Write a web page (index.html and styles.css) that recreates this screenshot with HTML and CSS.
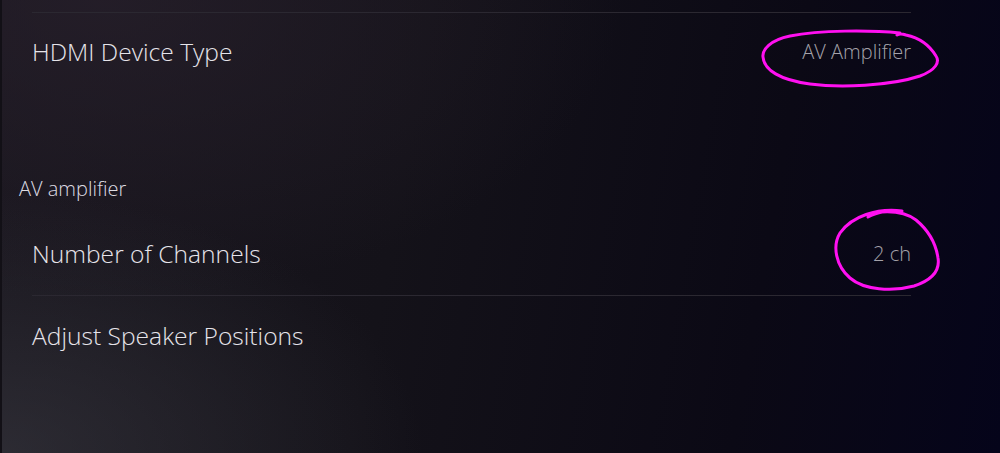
FILE: index.html
```html
<!DOCTYPE html>
<html lang="en">
<head>
    <meta charset="UTF-8">
    <meta name="viewport" content="width=device-width, initial-scale=1.0">
    <title>Sound Output</title>
    <link rel="stylesheet" href="styles.css">
</head>
<body>
    <div id="screen">
        <div id="settingsList">
            <div class="row first">
                <span class="label">HDMI Device Type</span>
                <span class="value">AV Amplifier</span>
                <svg class="scribble scribble-wide" width="180" height="60" viewBox="0 0 180 60">
                    <path d="M140 3 C110 0 60 0 30 6 C10 10 2 20 3 27 C4 40 20 50 50 54 C80 58 130 56 160 46 C176 40 180 32 176 26 C170 16 160 8 146 5 C143 4 140 3 137 5" />
                </svg>
            </div>
            <div class="section-title">AV amplifier</div>
            <div class="row">
                <span class="label">Number of Channels</span>
                <span class="value">2 ch</span>
                <svg class="scribble scribble-round" width="110" height="88" viewBox="0 0 110 88">
                    <path d="M70 3 C45 0 20 8 8 25 C0 38 4 58 18 70 C32 82 60 84 82 78 C100 72 108 62 106 50 C104 36 96 22 84 12 C76 6 66 3 50 4 C44 5 40 7 36 9" />
                </svg>
            </div>
            <div class="row">
                <span class="label">Adjust Speaker Positions</span>
            </div>
        </div>
    </div>
</body>
</html>
```

FILE: styles.css
```css
body, html {
    margin: 0;
    padding: 0;
    width: 100%;
    height: 100%;
    overflow: hidden;
    font-family: "Open Sans", "Noto Sans", sans-serif;
}
#screen {
    width: 100%;
    height: 100%;
    box-sizing: border-box;
    border-left: 2px solid #121016;
    background:
        radial-gradient(ellipse 420px 260px at 0% 100%, rgba(60, 60, 68, 0.55), rgba(60, 60, 68, 0) 100%),
        radial-gradient(ellipse 520px 300px at 10% 0%, rgba(40, 32, 44, 0.7), rgba(40, 32, 44, 0) 100%),
        linear-gradient(100deg, #1a171f 0%, #141219 40%, #0b0915 75%, #05041a 100%);
}
#settingsList {
    width: 909px;
    padding-top: 12px;
}
.row {
    position: relative;
    display: flex;
    align-items: center;
    justify-content: space-between;
    box-sizing: border-box;
    height: 81px;
    padding-bottom: 3px;
    margin-left: 30px;
    border-bottom: 1px solid #2b2831;
}
.row.first {
    border-top: 1px solid #2b2831;
    border-bottom: none;
}
.row:last-child {
    border-bottom: none;
}
.label {
    color: #e6e4ea;
    font-size: 24.6px;
    font-weight: 300;
}
.value {
    color: #a4a2aa;
    font-size: 20px;
    font-weight: 300;
}
.section-title {
    color: #dddbe2;
    font-size: 20px;
    font-weight: 300;
    margin: 84px 0 14px 17px;
    line-height: 24px;
}
.scribble {
    position: absolute;
    overflow: visible;
}
.scribble path {
    fill: none;
    stroke: #ff10f0;
    stroke-width: 3;
    stroke-linecap: round;
    stroke-linejoin: round;
}
.scribble-wide {
    right: -29px;
    top: 17px;
}
.scribble-round {
    right: -31px;
    top: -7px;
}
```
